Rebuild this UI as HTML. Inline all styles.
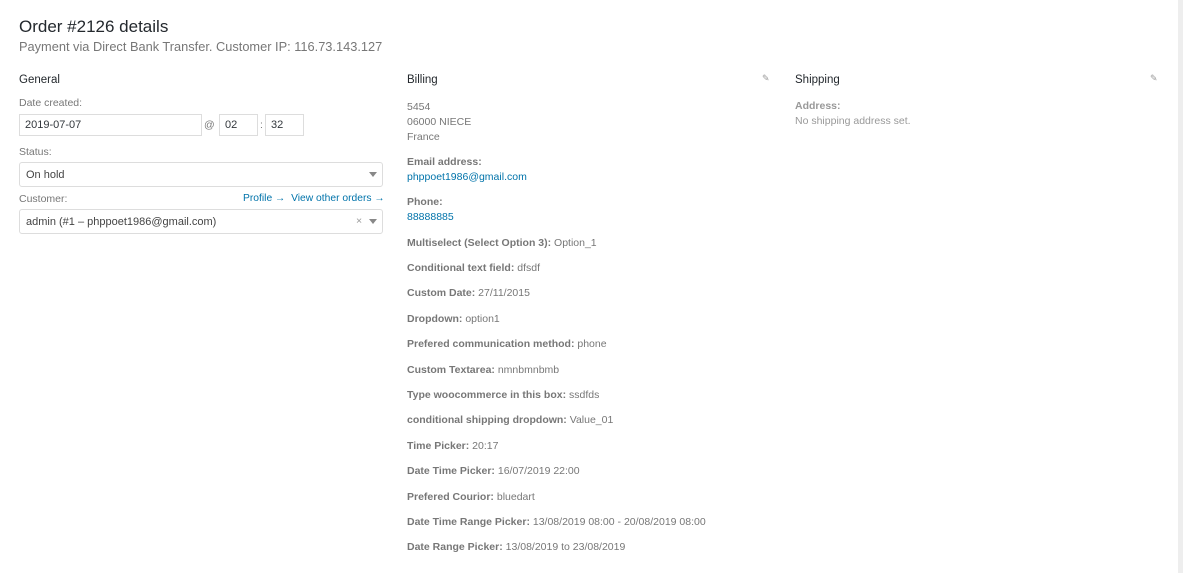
<!DOCTYPE html>
<html><head><meta charset="utf-8"><style>
body{margin:0;width:1183px;height:573px;background:#fff;font-family:"Liberation Sans",sans-serif;color:#777;font-size:10.5px;position:relative;overflow:hidden}
.a{position:absolute;white-space:nowrap}
.h{color:#23282d;font-size:11.5px}
.b{font-weight:bold;color:#777}
.l{color:#0073aa}
.inp{position:absolute;border:1px solid #ddd;box-sizing:border-box;height:22px;color:#32373c;font-size:11px;padding:4px 0 0 5px}
.sel{position:absolute;border:1px solid #ddd;border-radius:3px;box-sizing:border-box;height:25px;color:#444;font-size:11px;padding:6px 0 0 6px}
.tri{position:absolute;width:0;height:0;border-left:4px solid transparent;border-right:4px solid transparent;border-top:5px solid #888}
</style></head><body>
<div style="position:absolute;right:0;top:0;width:5px;height:573px;background:#eee"></div>
<div class="a" style="left:19px;top:17px;font-size:17px;color:#23282d">Order #2126 details</div>
<div class="a" style="left:19px;top:39px;font-size:12.8px;color:#777">Payment via Direct Bank Transfer. Customer IP: 116.73.143.127</div>

<div class="a h" style="left:19px;top:74px">General</div>
<div class="a" style="left:19px;top:97px">Date created:</div>
<div class="inp" style="left:19px;top:114px;width:183px">2019-07-07</div>
<div class="a" style="left:204px;top:119px">@</div>
<div class="inp" style="left:219px;top:114px;width:39px">02</div>
<div class="a" style="left:260px;top:119px">:</div>
<div class="inp" style="left:265px;top:114px;width:39px">32</div>
<div class="a" style="left:19px;top:146px">Status:</div>
<div class="sel" style="left:19px;top:162px;width:364px">On hold</div>
<div class="tri" style="left:369px;top:172px"></div>
<div class="a" style="left:19px;top:193px">Customer:</div>
<div class="a l" style="left:243px;top:193px;font-size:10.3px">Profile →&nbsp; View other orders →</div>
<div class="sel" style="left:19px;top:209px;width:364px">admin (#1 – phppoet1986@gmail.com)</div>
<div class="a" style="left:356px;top:215px;color:#999">×</div>
<div class="tri" style="left:369px;top:219px"></div>

<div class="a h" style="left:407px;top:74px">Billing</div>
<div class="a" style="left:762px;top:73px;color:#999;font-size:9px">✎</div>
<div class="a" style="left:407px;top:100px;line-height:15px">5454<br>06000 NIECE<br>France</div>
<div class="a b" style="left:407px;top:156px">Email address:</div>
<div class="a l" style="left:407px;top:171px">phppoet1986@gmail.com</div>
<div class="a b" style="left:407px;top:196px">Phone:</div>
<div class="a l" style="left:407px;top:211px">88888885</div>
<div class="a" style="left:407px;top:237px"><span class="b">Multiselect (Select Option 3):</span> Option_1</div>
<div class="a" style="left:407px;top:262px"><span class="b">Conditional text field:</span> dfsdf</div>
<div class="a" style="left:407px;top:287px"><span class="b">Custom Date:</span> 27/11/2015</div>
<div class="a" style="left:407px;top:313px"><span class="b">Dropdown:</span> option1</div>
<div class="a" style="left:407px;top:338px"><span class="b">Prefered communication method:</span> phone</div>
<div class="a" style="left:407px;top:364px"><span class="b">Custom Textarea:</span> nmnbmnbmb</div>
<div class="a" style="left:407px;top:389px"><span class="b">Type woocommerce in this box:</span> ssdfds</div>
<div class="a" style="left:407px;top:414px"><span class="b">conditional shipping dropdown:</span> Value_01</div>
<div class="a" style="left:407px;top:440px"><span class="b">Time Picker:</span> 20:17</div>
<div class="a" style="left:407px;top:465px"><span class="b">Date Time Picker:</span> 16/07/2019 22:00</div>
<div class="a" style="left:407px;top:491px"><span class="b">Prefered Courior:</span> bluedart</div>
<div class="a" style="left:407px;top:516px"><span class="b">Date Time Range Picker:</span> 13/08/2019 08:00 - 20/08/2019 08:00</div>
<div class="a" style="left:407px;top:541px"><span class="b">Date Range Picker:</span> 13/08/2019 to 23/08/2019</div>

<div class="a h" style="left:795px;top:74px">Shipping</div>
<div class="a" style="left:1150px;top:73px;color:#999;font-size:9px">✎</div>
<div class="a" style="left:795px;top:100px;color:#999;font-weight:bold">Address:</div>
<div class="a" style="left:795px;top:115px;color:#999">No shipping address set.</div>
</body></html>
